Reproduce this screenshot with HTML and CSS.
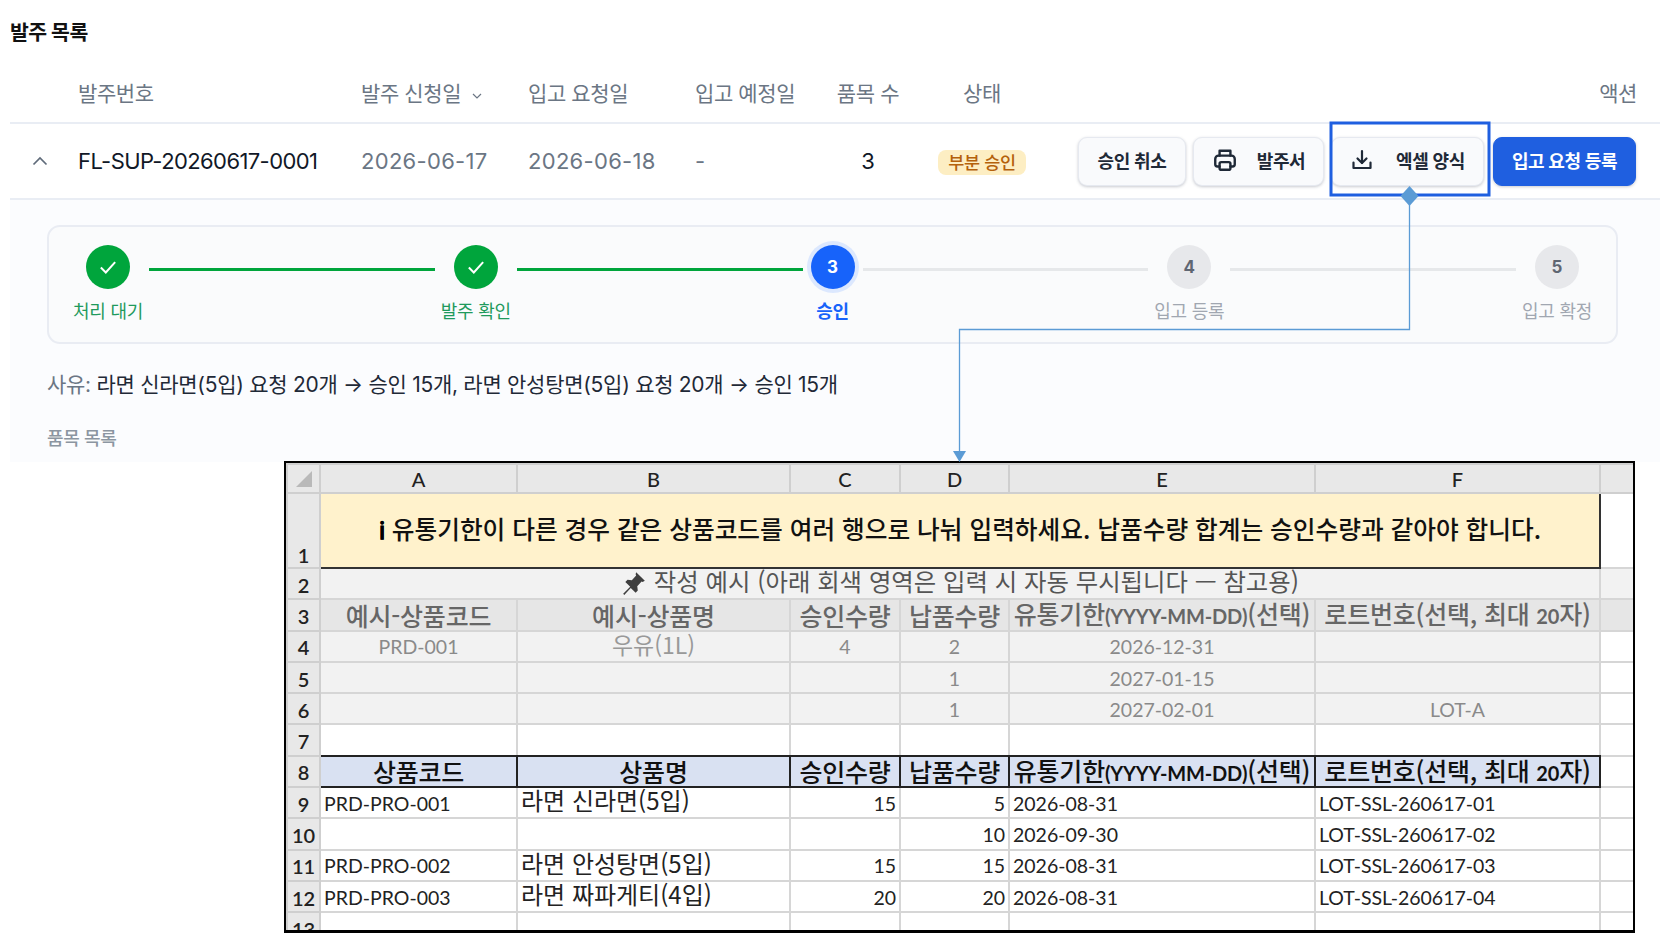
FILE: index.html
```html
<!DOCTYPE html>
<html lang="ko">
<head>
<meta charset="utf-8">
<title>발주 목록</title>
<link rel="stylesheet" href="styles.css">
</head>
<body>
<div class="page">
  <main class="orders">
    <h1 class="title">발주 목록</h1>
    <div class="row head">
      <span></span>
      <span>발주번호</span>
      <span class="sort">발주 신청일
        <svg class="sort-ic" viewBox="0 0 10 6" width="10" height="6"><path d="M1 1l4 4 4-4" fill="none" stroke="#6b7684" stroke-width="1.2"/></svg>
      </span>
      <span>입고 요청일</span>
      <span>입고 예정일</span>
      <span class="count">품목 수</span>
      <span class="status-h">상태</span>
      <span class="act-h">액션</span>
    </div>
    <div class="row item">
      <span class="chev"><svg viewBox="0 0 16 10" width="16" height="10"><path d="M1.5 8.5L8 2l6.5 6.5" fill="none" stroke="#5f6b7a" stroke-width="1.7"/></svg></span>
      <span class="no">FL-SUP-20260617-0001</span>
      <span class="date">2026-06-17</span>
      <span class="date">2026-06-18</span>
      <span class="date">-</span>
      <span class="count num">3</span>
      <span class="badge">부분 승인</span>
      <div class="actions">
        <button class="btn b-cancel">승인 취소</button>
        <button class="btn b-print">
          <svg viewBox="0 0 24 24" width="26" height="26" fill="none" stroke="#1f2937" stroke-width="2.2" stroke-linecap="round" stroke-linejoin="round"><path d="M7 8V3.5h10V8"/><path d="M7 18H5a2 2 0 0 1-2-2v-5a3 3 0 0 1 3-3h12a3 3 0 0 1 3 3v5a2 2 0 0 1-2 2h-2"/><rect x="7" y="14" width="10" height="7" rx="1.5"/></svg>
          발주서
        </button>
        <button class="btn b-excel">
          <svg viewBox="0 0 24 24" width="24" height="24" fill="none" stroke="#1f2937" stroke-width="2.2" stroke-linecap="round" stroke-linejoin="round"><path d="M12 3v12"/><path d="M7.5 10.5L12 15l4.5-4.5"/><path d="M3.5 14.5V20h17v-5.500"/></svg>
          엑셀 양식
        </button>
        <button class="btn primary">입고 요청 등록</button>
      </div>
    </div>
    <section class="detail">
      <div class="stepper">
        <div class="step done"><span class="dot"><svg viewBox="0 0 20 20" width="22" height="22"><path d="M3.500 10.500l4.500 4.500 8.500-9.500" fill="none" stroke="#fff" stroke-width="1.800"/></svg></span><span class="lab">처리 대기</span></div>
        <i class="bar on"></i>
        <div class="step done"><span class="dot"><svg viewBox="0 0 20 20" width="22" height="22"><path d="M3.500 10.500l4.500 4.500 8.500-9.500" fill="none" stroke="#fff" stroke-width="1.800"/></svg></span><span class="lab">발주 확인</span></div>
        <i class="bar on"></i>
        <div class="step cur"><span class="dot">3</span><span class="lab">승인</span></div>
        <i class="bar"></i>
        <div class="step"><span class="dot">4</span><span class="lab">입고 등록</span></div>
        <i class="bar"></i>
        <div class="step"><span class="dot">5</span><span class="lab">입고 확정</span></div>
      </div>
      <p class="reason"><span class="reason-k">사유:</span> 라면 신라면(5입) 요청 20개 → 승인 15개, 라면 안성탕면(5입) 요청 20개 → 승인 15개</p>
      <h2 class="sub">품목 목록</h2>
    </section>
  </main>

  <div class="sheet">
    <table class="xl">
      <colgroup><col class="c0"><col class="ca"><col class="cb"><col class="cc"><col class="cd"><col class="ce"><col class="cf"><col class="cg"></colgroup>
      <tr class="r-h"><th class="corner"><svg viewBox="0 0 20 20" width="20" height="20"><path d="M18 2v16H2z" fill="#b9b9b9"/></svg></th><th>A</th><th>B</th><th>C</th><th>D</th><th>E</th><th>F</th><th></th></tr>
      <tr class="r1"><th>1</th><td colspan="6" class="notice"><span class="info">ℹ</span> 유통기한이 다른 경우 같은 상품코드를 여러 행으로 나눠 입력하세요. 납품수량 합계는 승인수량과 같아야 합니다.</td><td></td></tr>
      <tr class="ex"><th>2</th><td colspan="6" class="ex-title"><svg class="pin" viewBox="0 0 24 24" width="26" height="26"><path d="M14 2l8 8-2 1-1-.5-4 4.500.5 4-2 2-4.500-4.500L3 23l-1-1 6.500-6.500L4 11l2-2 4 .5 4-4.500-.5-1z" fill="#3f3f3f"/></svg> 작성 예시 (아래 회색 영역은 입력 시 자동 무시됩니다 — 참고용)</td><td></td></tr>
      <tr class="ex ex-h"><th>3</th><td>예시-상품코드</td><td>예시-상품명</td><td>승인수량</td><td>납품수량</td><td>유통기한<b>(YYYY-MM-DD)</b>(선택)</td><td>로트번호(선택, 최대 <b>20</b>자)</td><td class="plain"></td></tr>
      <tr class="ex"><th>4</th><td>PRD-001</td><td class="ko">우유(1L)</td><td>4</td><td>2</td><td>2026-12-31</td><td></td><td class="plain"></td></tr>
      <tr class="ex"><th>5</th><td></td><td></td><td></td><td>1</td><td>2027-01-15</td><td></td><td class="plain"></td></tr>
      <tr class="ex"><th>6</th><td></td><td></td><td></td><td>1</td><td>2027-02-01</td><td>LOT-A</td><td class="plain"></td></tr>
      <tr class="pre"><th>7</th><td></td><td></td><td></td><td></td><td></td><td></td><td></td></tr>
      <tr class="hd"><th>8</th><td>상품코드</td><td>상품명</td><td>승인수량</td><td>납품수량</td><td>유통기한<b>(YYYY-MM-DD)</b>(선택)</td><td>로트번호(선택, 최대 <b>20</b>자)</td><td class="plain"></td></tr>
      <tr><th>9</th><td>PRD-PRO-001</td><td class="ko">라면 신라면(5입)</td><td class="n">15</td><td class="n">5</td><td>2026-08-31</td><td>LOT-SSL-260617-01</td><td></td></tr>
      <tr><th>10</th><td></td><td></td><td></td><td class="n">10</td><td>2026-09-30</td><td>LOT-SSL-260617-02</td><td></td></tr>
      <tr><th>11</th><td>PRD-PRO-002</td><td class="ko">라면 안성탕면(5입)</td><td class="n">15</td><td class="n">15</td><td>2026-08-31</td><td>LOT-SSL-260617-03</td><td></td></tr>
      <tr><th>12</th><td>PRD-PRO-003</td><td class="ko">라면 짜파게티(4입)</td><td class="n">20</td><td class="n">20</td><td>2026-08-31</td><td>LOT-SSL-260617-04</td><td></td></tr>
      <tr><th>13</th><td></td><td></td><td></td><td></td><td></td><td></td><td></td></tr>
    </table>
  </div>

  <svg class="callout" viewBox="0 0 1660 933" width="1660" height="933">
    <rect x="1331" y="123" width="158" height="72" fill="none" stroke="#1f5fe0" stroke-width="3"/>
    <path d="M1409.500 196V329.500H959.500V452" fill="none" stroke="#5b9bd5" stroke-width="1.300"/>
    <path d="M1409.500 186l9 10-9 10-9-10z" fill="#5b9bd5"/>
    <path d="M953 451h13l-6.500 11z" fill="#5b9bd5"/>
  </svg>
</div>
</body>
</html>
```

FILE: styles.css
```css
* { box-sizing: border-box; }
html, body { margin: 0; height: 933px; overflow: hidden; background: #fff; }
body { font-family: Inter, "Noto Sans CJK KR", sans-serif; color: #111827; }
.page { position: relative; width: 1660px; height: 933px; overflow: hidden; }

.orders { margin-left: 10px; }
.title { margin: 0; height: 60px; padding-top: 19px; font-size: 20.5px; line-height: 28px; font-weight: 700; letter-spacing: -0.5px; color: #111; }

.row { display: grid; grid-template-columns: 68px 283px 167px 167px 141px 101px 90px 1fr; align-items: center; }
.head { height: 64px; padding-top: 2px; border-bottom: 2px solid #e9edf4; color: #6b7684; font-size: 21px; letter-spacing: -0.4px; font-weight: 400; }
.item { height: 76px; border-bottom: 2px solid #e9edf4; font-size: 22px; }
.sort-ic { margin-left: 5px; vertical-align: 2px; }
.count { width: 64px; text-align: center; white-space: nowrap; }
.status-h { text-align: center; }
.act-h { text-align: right; padding-right: 23px; }
.chev { padding-left: 22px; display: flex; }
.no { color: #111827; letter-spacing: -0.6px; white-space: nowrap; }
.date { color: #6b7684; letter-spacing: 0.3px; }
.num { color: #111827; }
.badge { justify-self: center; margin-top: 2px; white-space: nowrap; background: #fdeec3; color: #b4610c; font-size: 17.5px; font-weight: 500; line-height: 25px; padding: 0 10px; border-radius: 8px; letter-spacing: -0.3px; }
.actions { display: flex; justify-content: flex-end; gap: 7px; padding-right: 24px; }
.btn { height: 49px; border: 1px solid #e6e9f0; border-radius: 9px; background: #f9fafc; box-shadow: 0 1px 3px rgba(60, 70, 90, .28); color: #1f2937; font-family: inherit; font-size: 18px; font-weight: 600; letter-spacing: -0.4px; display: flex; align-items: center; justify-content: center; gap: 19px; padding: 0 0 2px; white-space: nowrap; }
.b-cancel { width: 108px; }
.b-print { width: 131px; }
.b-excel { width: 153px; margin-right: 2px; gap: 22px; }
.primary { width: 143px; background: #1f5fe0; border-color: #1f5fe0; color: #fff; }

.detail { background: #fbfcfe; height: 262px; padding: 25px 42px 0 37px; }
.stepper { height: 119px; border: 2px solid #e9ecf3; border-radius: 13px; background: #fafbfc; padding: 18px 24px 0; display: flex; align-items: flex-start; }
.step { width: 70px; flex: none; display: flex; flex-direction: column; align-items: center; white-space: nowrap; }
.step.cur { width: 48px; }
.dot { width: 44px; height: 44px; border-radius: 50%; background: #e7e8eb; color: #5f6672; font-size: 17px; font-weight: 700; display: flex; align-items: center; justify-content: center; }
.done .dot { background: #00a53c; }
.cur .dot { background: #1763fa; color: #fff; box-shadow: 0 0 0 4px #dce8fe; }
.lab { margin-top: 11px; font-size: 18px; line-height: 24px; color: #a1a7b1; letter-spacing: -0.3px; }
.done .lab { color: #1f9a5c; font-weight: 400; }
.cur .lab { color: #1763fa; font-weight: 600; }
.bar { flex: 1; height: 3px; margin: 23px 6px 0; background: #e6e8ea; }
.bar.on { background: #00a53c; }
.reason { margin: 25px 0 0; font-size: 21px; line-height: 32px; letter-spacing: -0.28px; color: #1f2937; white-space: nowrap; }
.reason-k { color: #6b7684; }
.sub { margin: 26px 0 0; font-size: 18px; line-height: 24px; font-weight: 500; color: #8b95a1; letter-spacing: -0.3px; }

.sheet { position: absolute; left: 284px; top: 461px; width: 1351px; height: 472px; border: 2px solid #000; border-bottom-width: 3px; background: #fff; overflow: hidden; }
.xl { border-collapse: collapse; table-layout: fixed; width: 1347px; font-family: Lato, "Noto Sans CJK KR", sans-serif; font-size: 19.500px; color: #222; }
.c0 { width: 33px; } .ca { width: 197px; } .cb { width: 273px; } .cc { width: 110px; } .cd { width: 109px; } .ce { width: 306px; } .cf { width: 285px; } .cg { width: 34px; }
.xl tr { height: 31.300px; }
.xl th { background: #e8e8e8; border: 2px solid #cfcfcf; font-weight: 600; padding: 2px 0 0; font-size: 20px; line-height: 24px; color: #222; text-align: center; }
.xl td { border: 2px solid #d6d6d6; padding: 2px 3px 0; white-space: nowrap; line-height: 24px; }
.xl .r-h { height: 29px; }
.xl .r-h th { font-weight: 500; padding-top: 0; }
.corner svg { display: block; margin: auto; }
.xl .r1 { height: 75px; }
.r1 th { vertical-align: bottom; }
.xl .notice { background: #fff2cc; border: 2px solid #333; border-top-color: #d6d6d6; border-left-color: #d6d6d6; padding: 0 0 2px; text-align: center; font-family: "Noto Sans CJK KR", sans-serif; font-size: 24.700px; font-weight: 500; color: #111; letter-spacing: 0; }
.info { font-family: "DejaVu Serif", serif; font-weight: 700; font-size: 24px; color: #000; -webkit-text-stroke: 0.4px #000; }
.ex td { background: #f2f2f2; color: #8a8a8a; text-align: center; }
.ex .plain { background: #fff; }
.xl .ex-title { padding: 0; font-family: "Noto Sans CJK KR", sans-serif; font-size: 24.400px; color: #555; vertical-align: top; }
.pin { vertical-align: -5px; }
.xl .ex-h td { background: #e6e6e6; font-family: "Noto Sans CJK KR", sans-serif; font-size: 25px; font-weight: 500; color: #666; padding: 0; letter-spacing: -0.2px; }
.ex-h b, .hd b { font-family: Lato, sans-serif; font-size: 20px; font-weight: 700; }
.xl .hd td { background: #d9e1f2; border: 2px solid #222; font-family: "Noto Sans CJK KR", sans-serif; font-size: 25px; font-weight: 500; color: #111; text-align: center; padding: 0; letter-spacing: -0.2px; }
.xl .pre td:not(:last-child) { border-bottom-color: #222; }
.xl .hd .plain { background: #fff; border: 2px solid #d6d6d6; border-left-color: #222; }
.xl .ko { padding-top: 0; font-family: "Noto Sans CJK KR", sans-serif; font-size: 24px; vertical-align: top; }
.xl .ex .ko { color: #999; font-size: 23px; }
.xl .n { text-align: right; }

.callout { position: absolute; left: 0; top: 0; pointer-events: none; }
```
